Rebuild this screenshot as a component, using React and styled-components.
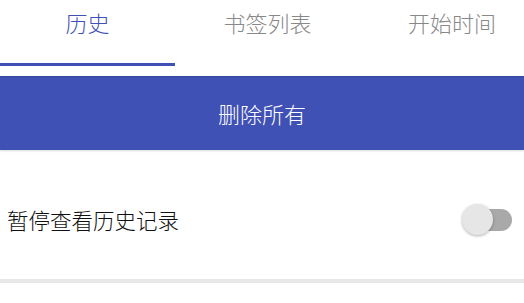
import React, { useState } from "react";
import styled, { createGlobalStyle } from "styled-components";

const GlobalStyle = createGlobalStyle`
  html, body {
    margin: 0;
    padding: 0;
    background: #ffffff;
    font-family: "Noto Sans CJK SC", "Noto Sans", Roboto, sans-serif;
  }
`;

const Page = styled.div`
  width: 524px;
  height: 303px;
  overflow: hidden;
  background: #fff;
  display: flex;
  flex-direction: column;
`;

const TabBar = styled.div`
  display: flex;
  height: 76px;
  overflow: hidden;
  position: relative;
  z-index: 1;
  box-shadow: 0 1px 1px rgba(0, 0, 0, 0.12);
`;

const Tab = styled.div`
  flex: 0 0 ${({ $w }) => $w}px;
  height: 66px;
  box-sizing: border-box;
  padding-top: 6px;
  display: flex;
  justify-content: center;
  font-size: 22px;
  font-weight: 300;
  line-height: 32px;
  color: ${({ $active }) => ($active ? "#3f51b5" : "#888888")};
  border-bottom: 3px solid
    ${({ $active }) => ($active ? "#3f51b5" : "transparent")};
  cursor: pointer;
`;

const DeleteButton = styled.div`
  height: 74px;
  background: #3f51b5;
  color: #fff;
  display: flex;
  align-items: center;
  justify-content: center;
  font-size: 22px;
  font-weight: 300;
  box-shadow: 0 1px 2px rgba(0, 0, 0, 0.15);
  position: relative;
`;

const Row = styled.div`
  height: 133px;
  box-sizing: border-box;
  padding: 10px 12px 0 7px;
  display: flex;
  align-items: center;
  justify-content: space-between;
  border-bottom: 4px solid #e8e8e8;
`;

const Label = styled.span`
  font-size: 21.5px;
  font-weight: 300;
  color: #111;
`;

const Track = styled.div`
  width: 46px;
  height: 22px;
  border-radius: 11px;
  background: #a9a9a9;
  position: relative;
`;

const Thumb = styled.div`
  position: absolute;
  left: -4px;
  top: -5px;
  width: 31px;
  height: 31px;
  border-radius: 50%;
  background: #e6e6e6;
  box-shadow: 0 1px 3px rgba(0, 0, 0, 0.3);
`;

const tabs = [
  { label: "历史", w: 175 },
  { label: "书签列表", w: 185 },
  { label: "开始时间", w: 184 },
];

export default function App() {
  const [active, setActive] = useState(0);
  return (
    <Page>
      <GlobalStyle />
      <TabBar>
        {tabs.map((t, i) => (
          <Tab
            key={t.label}
            $w={t.w}
            $active={i === active}
            onClick={() => setActive(i)}
          >
            {t.label}
          </Tab>
        ))}
      </TabBar>
      <DeleteButton>删除所有</DeleteButton>
      <Row>
        <Label>暂停查看历史记录</Label>
        <Track>
          <Thumb />
        </Track>
      </Row>
    </Page>
  );
}
